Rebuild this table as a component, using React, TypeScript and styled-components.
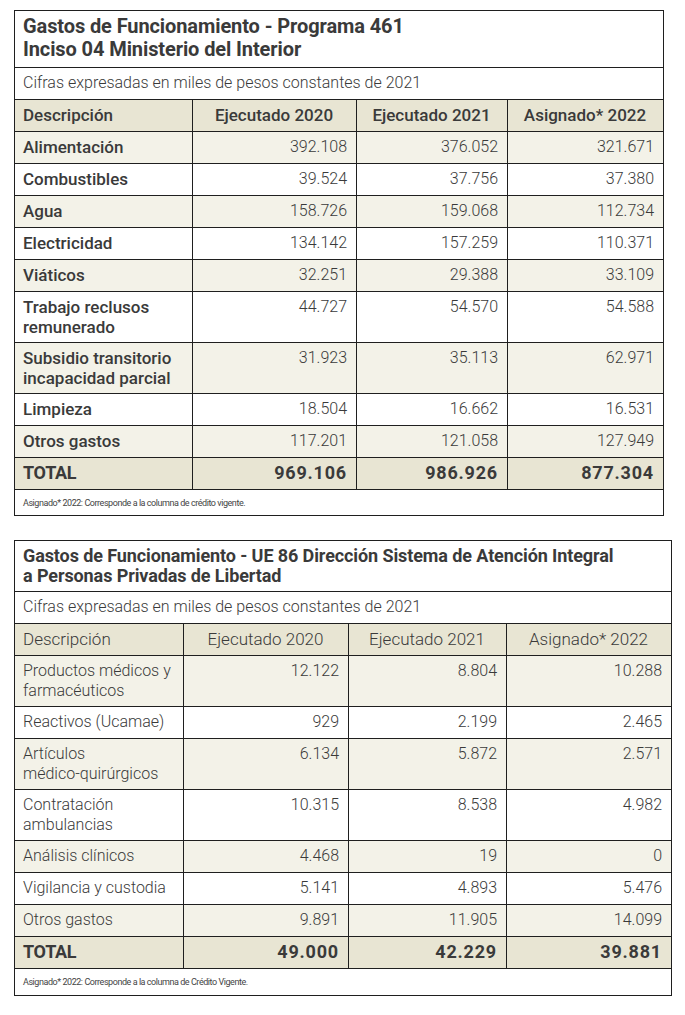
import React from "react";
import styled, { createGlobalStyle, css } from "styled-components";

const GlobalStyle = createGlobalStyle`
  *, *::before, *::after { box-sizing: border-box; }
  html, body { margin: 0; padding: 0; background: #ffffff; }
  body {
    font-family: Roboto, "Liberation Sans", Arial, sans-serif;
    color: #3b3b3b;
  }
`;

type Variant = "strong" | "light";
type Tone = "plain" | "stripe" | "head" | "total";

const toneBg: Record<Tone, string> = {
  plain: "#ffffff",
  stripe: "#f3f2e8",
  head: "#e8e5d3",
  total: "#e8e5d3",
};

const Page = styled.main`
  display: flex;
  flex-direction: column;
  align-items: flex-start;
  gap: 24px;
  padding: 10px 0 20px 14px;
`;

const Card = styled.section<{ $width: number }>`
  width: ${(p) => p.$width}px;
  border: 1px solid #1f1f1f;
  background: #ffffff;
`;

const Title = styled.h2<{ $variant: Variant }>`
  margin: 0;
  color: #3a3a3a;
  font-weight: 700;
  ${(p) =>
    p.$variant === "strong"
      ? css`
          font-size: 20px;
          line-height: 23px;
          letter-spacing: -0.1px;
          padding: 4px 8px 6px;
        `
      : css`
          font-size: 18px;
          line-height: 20px;
          letter-spacing: -0.1px;
          padding: 5px 8px 5px;
        `}
`;

const Subtitle = styled.p`
  margin: 0;
  border-top: 1px solid #1f1f1f;
  padding: 5px 8px 6px;
  font-size: 16px;
  line-height: 20px;
  font-weight: 300;
  color: #3a3a3a;
`;

const Row = styled.div<{ $cols: string; $tone: Tone }>`
  display: grid;
  grid-template-columns: ${(p) => p.$cols};
  min-height: 32px;
  border-top: 1px solid #1f1f1f;
  background: ${(p) => toneBg[p.$tone]};
`;

const Cell = styled.div<{
  $align: "left" | "center" | "right";
  $size: number;
  $weight: number;
  $spacing?: number;
}>`
  padding: 5px 9px 5px 8px;
  text-align: ${(p) => p.$align};
  font-size: ${(p) => p.$size}px;
  font-weight: ${(p) => p.$weight};
  letter-spacing: ${(p) => p.$spacing ?? 0}px;
  line-height: 20px;
  color: #3a3a3a;
  white-space: nowrap;

  & + & {
    border-left: 1px solid #1f1f1f;
  }
`;

const Footnote = styled.p<{ $height: number }>`
  margin: 0;
  border-top: 1px solid #1f1f1f;
  height: ${(p) => p.$height}px;
  display: flex;
  align-items: center;
  padding: 0 8px;
  font-size: 9px;
  letter-spacing: -0.45px;
  font-weight: 400;
  color: #444444;
`;

type DataRow = { label: string[]; values: string[] };

type TableSpec = {
  variant: Variant;
  width: number;
  cols: string;
  title: string[];
  rows: DataRow[];
  total: string[];
  note: string;
  noteHeight: number;
};

const headers = ["Ejecutado 2020", "Ejecutado 2021", "Asignado* 2022"];

const typo = {
  strong: {
    head: { size: 17, weight: 500 },
    label: { size: 17, weight: 500 },
    value: { size: 16, weight: 300 },
    totalLabel: { size: 18, weight: 700, spacing: -0.3 },
    totalValue: { size: 18, weight: 700, spacing: 0.8 },
  },
  light: {
    head: { size: 17, weight: 300 },
    label: { size: 16, weight: 300 },
    value: { size: 16, weight: 300 },
    totalLabel: { size: 18, weight: 700, spacing: -0.3 },
    totalValue: { size: 18, weight: 700, spacing: 0.8 },
  },
};

function Lines({ lines }: { lines: string[] }) {
  return (
    <>
      {lines.map((line, i) => (
        <React.Fragment key={i}>
          {i > 0 && <br />}
          {line}
        </React.Fragment>
      ))}
    </>
  );
}

function BudgetTable({ spec }: { spec: TableSpec }) {
  const t = typo[spec.variant];
  return (
    <Card $width={spec.width}>
      <Title $variant={spec.variant}>
        <Lines lines={spec.title} />
      </Title>
      <Subtitle>Cifras expresadas en miles de pesos constantes de 2021</Subtitle>
      <Row $cols={spec.cols} $tone="head">
        <Cell $align="left" $size={t.head.size} $weight={t.head.weight}>
          Descripción
        </Cell>
        {headers.map((h) => (
          <Cell key={h} $align="center" $size={t.head.size} $weight={t.head.weight}>
            {h}
          </Cell>
        ))}
      </Row>
      {spec.rows.map((r, i) => (
        <Row key={r.label.join(" ")} $cols={spec.cols} $tone={i % 2 === 0 ? "stripe" : "plain"}>
          <Cell $align="left" $size={t.label.size} $weight={t.label.weight}>
            <Lines lines={r.label} />
          </Cell>
          {r.values.map((v, j) => (
            <Cell key={j} $align="right" $size={t.value.size} $weight={t.value.weight}>
              {v}
            </Cell>
          ))}
        </Row>
      ))}
      <Row $cols={spec.cols} $tone="total">
        <Cell
          $align="left"
          $size={t.totalLabel.size}
          $weight={t.totalLabel.weight}
          $spacing={t.totalLabel.spacing}
        >
          TOTAL
        </Cell>
        {spec.total.map((v, j) => (
          <Cell
            key={j}
            $align="right"
            $size={t.totalValue.size}
            $weight={t.totalValue.weight}
            $spacing={t.totalValue.spacing}
          >
            {v}
          </Cell>
        ))}
      </Row>
      <Footnote $height={spec.noteHeight}>{spec.note}</Footnote>
    </Card>
  );
}

const table1: TableSpec = {
  variant: "strong",
  width: 650,
  cols: "177px 164px 151px 156px",
  title: ["Gastos de Funcionamiento - Programa 461", "Inciso 04 Ministerio del Interior"],
  rows: [
    { label: ["Alimentación"], values: ["392.108", "376.052", "321.671"] },
    { label: ["Combustibles"], values: ["39.524", "37.756", "37.380"] },
    { label: ["Agua"], values: ["158.726", "159.068", "112.734"] },
    { label: ["Electricidad"], values: ["134.142", "157.259", "110.371"] },
    { label: ["Viáticos"], values: ["32.251", "29.388", "33.109"] },
    { label: ["Trabajo reclusos", "remunerado"], values: ["44.727", "54.570", "54.588"] },
    {
      label: ["Subsidio transitorio", "incapacidad parcial"],
      values: ["31.923", "35.113", "62.971"],
    },
    { label: ["Limpieza"], values: ["18.504", "16.662", "16.531"] },
    { label: ["Otros gastos"], values: ["117.201", "121.058", "127.949"] },
  ],
  total: ["969.106", "986.926", "877.304"],
  note: "Asignado* 2022: Corresponde a la columna de crédito vigente.",
  noteHeight: 26,
};

const table2: TableSpec = {
  variant: "light",
  width: 658,
  cols: "168px 165px 158px 165px",
  title: [
    "Gastos de Funcionamiento - UE 86 Dirección Sistema de Atención Integral",
    "a Personas Privadas de Libertad",
  ],
  rows: [
    { label: ["Productos médicos y", "farmacéuticos"], values: ["12.122", "8.804", "10.288"] },
    { label: ["Reactivos (Ucamae)"], values: ["929", "2.199", "2.465"] },
    { label: ["Artículos", "médico-quirúrgicos"], values: ["6.134", "5.872", "2.571"] },
    { label: ["Contratación", "ambulancias"], values: ["10.315", "8.538", "4.982"] },
    { label: ["Análisis clínicos"], values: ["4.468", "19", "0"] },
    { label: ["Vigilancia y custodia"], values: ["5.141", "4.893", "5.476"] },
    { label: ["Otros gastos"], values: ["9.891", "11.905", "14.099"] },
  ],
  total: ["49.000", "42.229", "39.881"],
  note: "Asignado* 2022: Corresponde a la columna de Crédito Vigente.",
  noteHeight: 27,
};

export default function App() {
  return (
    <>
      <GlobalStyle />
      <Page>
        <BudgetTable spec={table1} />
        <BudgetTable spec={table2} />
      </Page>
    </>
  );
}
